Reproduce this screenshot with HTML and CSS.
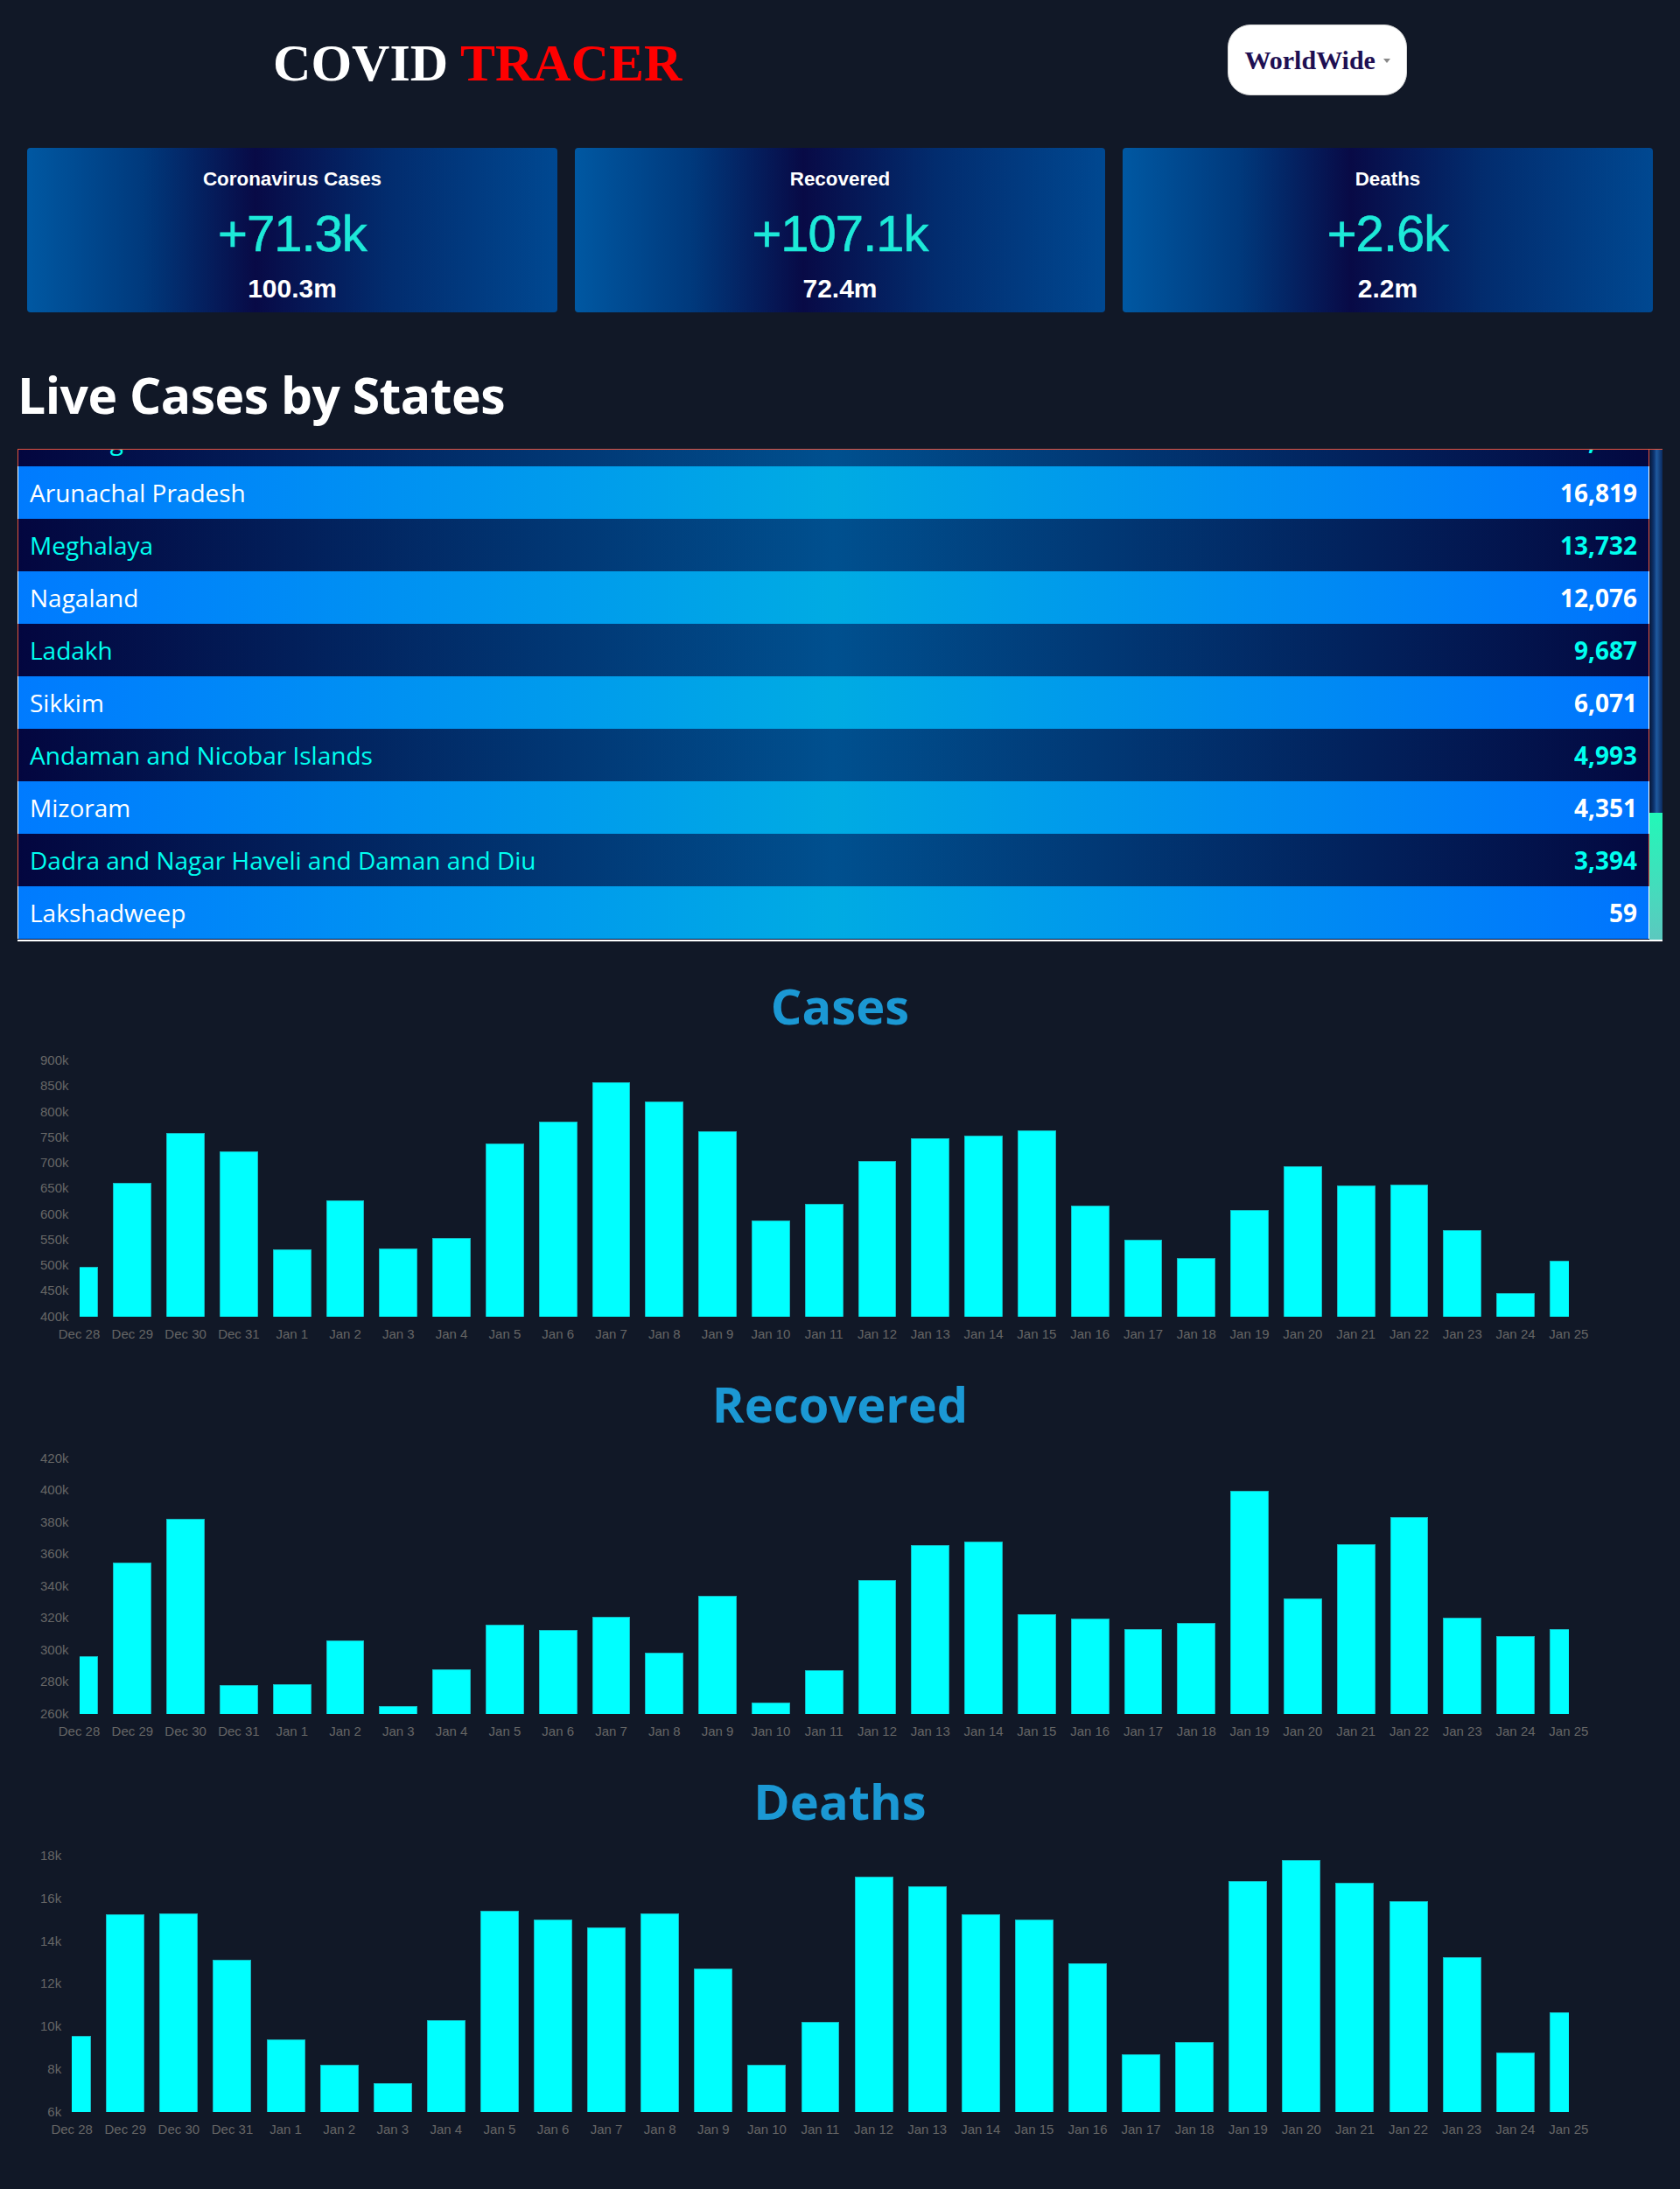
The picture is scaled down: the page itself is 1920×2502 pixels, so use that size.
FILE: index.html
```html
<!DOCTYPE html>
<html lang="en">
<head>
<meta charset="utf-8">
<title>COVID TRACER</title>
<link rel="stylesheet" href="styles.css">
</head>
<body>
<header class="topbar">
  <h1 class="brand"><span class="brand-white">COVID</span> <span class="brand-red">TRACER</span></h1>
  <div class="country-select">
    <span class="country-label">WorldWide</span>
    <span class="caret"></span>
  </div>
</header>

<section class="cards">
  <div class="card">
    <div class="card-title">Coronavirus Cases</div>
    <div class="card-delta">+71.3k</div>
    <div class="card-total">100.3m</div>
  </div>
  <div class="card">
    <div class="card-title">Recovered</div>
    <div class="card-delta">+107.1k</div>
    <div class="card-total">72.4m</div>
  </div>
  <div class="card">
    <div class="card-title">Deaths</div>
    <div class="card-delta">+2.6k</div>
    <div class="card-total">2.2m</div>
  </div>
</section>

<section class="states">
  <h2 class="states-heading">Live Cases by States</h2>
  <div class="states-frame">
    <div class="states-scroll">
      <div class="states-list">
        <div class="row dark"><span>Chandigarh</span><b>20,786</b></div>
        <div class="row light"><span>Arunachal Pradesh</span><b>16,819</b></div>
        <div class="row dark"><span>Meghalaya</span><b>13,732</b></div>
        <div class="row light"><span>Nagaland</span><b>12,076</b></div>
        <div class="row dark"><span>Ladakh</span><b>9,687</b></div>
        <div class="row light"><span>Sikkim</span><b>6,071</b></div>
        <div class="row dark"><span>Andaman and Nicobar Islands</span><b>4,993</b></div>
        <div class="row light"><span>Mizoram</span><b>4,351</b></div>
        <div class="row dark"><span>Dadra and Nagar Haveli and Daman and Diu</span><b>3,394</b></div>
        <div class="row light"><span>Lakshadweep</span><b>59</b></div>
      </div>
    </div>
    <div class="scrollbar"><div class="scroll-thumb"></div></div>
  </div>
</section>

<section class="chart-section">
  <h2 class="chart-title">Cases</h2>
  <div class="chart">
    <div class="y-axis"><span>900k</span><span>850k</span><span>800k</span><span>750k</span><span>700k</span><span>650k</span><span>600k</span><span>550k</span><span>500k</span><span>450k</span><span>400k</span></div>
    <div class="plot">
      <div class="bars">
        <div class="slot"><i style="height:19.4%"></i></div>
        <div class="slot"><i style="height:52.3%"></i></div>
        <div class="slot"><i style="height:71.8%"></i></div>
        <div class="slot"><i style="height:64.4%"></i></div>
        <div class="slot"><i style="height:26.2%"></i></div>
        <div class="slot"><i style="height:45.2%"></i></div>
        <div class="slot"><i style="height:26.6%"></i></div>
        <div class="slot"><i style="height:30.7%"></i></div>
        <div class="slot"><i style="height:67.5%"></i></div>
        <div class="slot"><i style="height:76.1%"></i></div>
        <div class="slot"><i style="height:91.4%"></i></div>
        <div class="slot"><i style="height:83.8%"></i></div>
        <div class="slot"><i style="height:72.4%"></i></div>
        <div class="slot"><i style="height:37.5%"></i></div>
        <div class="slot"><i style="height:44%"></i></div>
        <div class="slot"><i style="height:60.8%"></i></div>
        <div class="slot"><i style="height:69.6%"></i></div>
        <div class="slot"><i style="height:70.6%"></i></div>
        <div class="slot"><i style="height:72.8%"></i></div>
        <div class="slot"><i style="height:43.4%"></i></div>
        <div class="slot"><i style="height:30%"></i></div>
        <div class="slot"><i style="height:22.8%"></i></div>
        <div class="slot"><i style="height:41.5%"></i></div>
        <div class="slot"><i style="height:58.6%"></i></div>
        <div class="slot"><i style="height:51.2%"></i></div>
        <div class="slot"><i style="height:51.5%"></i></div>
        <div class="slot"><i style="height:33.6%"></i></div>
        <div class="slot"><i style="height:9.2%"></i></div>
        <div class="slot"><i style="height:21.8%"></i></div>
      </div>
    </div>
    <div class="x-axis">
      <span>Dec 28</span><span>Dec 29</span><span>Dec 30</span><span>Dec 31</span><span>Jan 1</span><span>Jan 2</span><span>Jan 3</span><span>Jan 4</span><span>Jan 5</span><span>Jan 6</span><span>Jan 7</span><span>Jan 8</span><span>Jan 9</span><span>Jan 10</span><span>Jan 11</span><span>Jan 12</span><span>Jan 13</span><span>Jan 14</span><span>Jan 15</span><span>Jan 16</span><span>Jan 17</span><span>Jan 18</span><span>Jan 19</span><span>Jan 20</span><span>Jan 21</span><span>Jan 22</span><span>Jan 23</span><span>Jan 24</span><span>Jan 25</span>
    </div>
  </div>
</section>

<section class="chart-section">
  <h2 class="chart-title">Recovered</h2>
  <div class="chart">
    <div class="y-axis"><span>420k</span><span>400k</span><span>380k</span><span>360k</span><span>340k</span><span>320k</span><span>300k</span><span>280k</span><span>260k</span></div>
    <div class="plot">
      <div class="bars">
        <div class="slot"><i style="height:22.5%"></i></div>
        <div class="slot"><i style="height:59%"></i></div>
        <div class="slot"><i style="height:76.4%"></i></div>
        <div class="slot"><i style="height:11.4%"></i></div>
        <div class="slot"><i style="height:11.8%"></i></div>
        <div class="slot"><i style="height:28.6%"></i></div>
        <div class="slot"><i style="height:3.1%"></i></div>
        <div class="slot"><i style="height:17.3%"></i></div>
        <div class="slot"><i style="height:34.9%"></i></div>
        <div class="slot"><i style="height:32.9%"></i></div>
        <div class="slot"><i style="height:38%"></i></div>
        <div class="slot"><i style="height:23.8%"></i></div>
        <div class="slot"><i style="height:46.2%"></i></div>
        <div class="slot"><i style="height:4.6%"></i></div>
        <div class="slot"><i style="height:17.2%"></i></div>
        <div class="slot"><i style="height:52.2%"></i></div>
        <div class="slot"><i style="height:65.9%"></i></div>
        <div class="slot"><i style="height:67.5%"></i></div>
        <div class="slot"><i style="height:39.1%"></i></div>
        <div class="slot"><i style="height:37.4%"></i></div>
        <div class="slot"><i style="height:33%"></i></div>
        <div class="slot"><i style="height:35.4%"></i></div>
        <div class="slot"><i style="height:87.2%"></i></div>
        <div class="slot"><i style="height:45%"></i></div>
        <div class="slot"><i style="height:66.4%"></i></div>
        <div class="slot"><i style="height:76.8%"></i></div>
        <div class="slot"><i style="height:37.5%"></i></div>
        <div class="slot"><i style="height:30.3%"></i></div>
        <div class="slot"><i style="height:33%"></i></div>
      </div>
    </div>
    <div class="x-axis">
      <span>Dec 28</span><span>Dec 29</span><span>Dec 30</span><span>Dec 31</span><span>Jan 1</span><span>Jan 2</span><span>Jan 3</span><span>Jan 4</span><span>Jan 5</span><span>Jan 6</span><span>Jan 7</span><span>Jan 8</span><span>Jan 9</span><span>Jan 10</span><span>Jan 11</span><span>Jan 12</span><span>Jan 13</span><span>Jan 14</span><span>Jan 15</span><span>Jan 16</span><span>Jan 17</span><span>Jan 18</span><span>Jan 19</span><span>Jan 20</span><span>Jan 21</span><span>Jan 22</span><span>Jan 23</span><span>Jan 24</span><span>Jan 25</span>
    </div>
  </div>
</section>

<section class="chart-section">
  <h2 class="chart-title">Deaths</h2>
  <div class="chart">
    <div class="y-axis"><span>18k</span><span>16k</span><span>14k</span><span>12k</span><span>10k</span><span>8k</span><span>6k</span></div>
    <div class="plot">
      <div class="bars">
        <div class="slot"><i style="height:29.7%"></i></div>
        <div class="slot"><i style="height:77.1%"></i></div>
        <div class="slot"><i style="height:77.4%"></i></div>
        <div class="slot"><i style="height:59.3%"></i></div>
        <div class="slot"><i style="height:28.3%"></i></div>
        <div class="slot"><i style="height:18.2%"></i></div>
        <div class="slot"><i style="height:11%"></i></div>
        <div class="slot"><i style="height:35.8%"></i></div>
        <div class="slot"><i style="height:78.3%"></i></div>
        <div class="slot"><i style="height:75.2%"></i></div>
        <div class="slot"><i style="height:72.1%"></i></div>
        <div class="slot"><i style="height:77.6%"></i></div>
        <div class="slot"><i style="height:55.8%"></i></div>
        <div class="slot"><i style="height:18.2%"></i></div>
        <div class="slot"><i style="height:34.9%"></i></div>
        <div class="slot"><i style="height:91.7%"></i></div>
        <div class="slot"><i style="height:87.9%"></i></div>
        <div class="slot"><i style="height:77%"></i></div>
        <div class="slot"><i style="height:74.9%"></i></div>
        <div class="slot"><i style="height:57.8%"></i></div>
        <div class="slot"><i style="height:22.5%"></i></div>
        <div class="slot"><i style="height:27.3%"></i></div>
        <div class="slot"><i style="height:90.1%"></i></div>
        <div class="slot"><i style="height:98.3%"></i></div>
        <div class="slot"><i style="height:89.4%"></i></div>
        <div class="slot"><i style="height:82.2%"></i></div>
        <div class="slot"><i style="height:60.3%"></i></div>
        <div class="slot"><i style="height:23.2%"></i></div>
        <div class="slot"><i style="height:38.9%"></i></div>
      </div>
    </div>
    <div class="x-axis">
      <span>Dec 28</span><span>Dec 29</span><span>Dec 30</span><span>Dec 31</span><span>Jan 1</span><span>Jan 2</span><span>Jan 3</span><span>Jan 4</span><span>Jan 5</span><span>Jan 6</span><span>Jan 7</span><span>Jan 8</span><span>Jan 9</span><span>Jan 10</span><span>Jan 11</span><span>Jan 12</span><span>Jan 13</span><span>Jan 14</span><span>Jan 15</span><span>Jan 16</span><span>Jan 17</span><span>Jan 18</span><span>Jan 19</span><span>Jan 20</span><span>Jan 21</span><span>Jan 22</span><span>Jan 23</span><span>Jan 24</span><span>Jan 25</span>
    </div>
  </div>
</section>
</body>
</html>
```

FILE: styles.css
```css
* { box-sizing: border-box; }

html, body {
  margin: 0;
  padding: 0;
  background: #111827;
}

body {
  font-family: "Open Sans", "Noto Sans", sans-serif;
  color: #fff;
}

/* ---------- header ---------- */
.topbar {
  display: flex;
  justify-content: space-around;
  align-items: center;
  padding-top: 28px;
  height: 109px;
}

.brand {
  margin: 0;
  font-family: "Liberation Serif", "Times New Roman", serif;
  font-weight: 700;
  font-size: 60px;
  line-height: 1;
  padding-top: 6px;
  white-space: nowrap;
}

.brand-white { color: #fff; }
.brand-red { color: #ff0000; }

.country-select {
  display: flex;
  align-items: center;
  gap: 9px;
  height: 81px;
  padding: 0 18px;
  background: #fff;
  border: 1px solid #d8d8d8;
  border-radius: 26px;
}

.country-label {
  font-family: "Liberation Serif", "Times New Roman", serif;
  font-weight: 700;
  font-size: 30px;
  color: #1e0f52;
}

.caret {
  width: 0;
  height: 0;
  border-left: 4px solid transparent;
  border-right: 4px solid transparent;
  border-top: 5px solid #888;
  margin-top: 2px;
}

/* ---------- cards ---------- */
.cards {
  display: grid;
  grid-template-columns: repeat(3, 1fr);
  gap: 20px;
  padding: 0 31px;
  margin-top: 60px;
}

.card {
  height: 188px;
  border-radius: 4px;
  background: linear-gradient(to right, #0058a2 0%, #00397c 22%, #080a46 43%, #022c6e 68%, #004891 100%);
  text-align: center;
  font-family: "Liberation Sans", Arial, sans-serif;
  padding-top: 23px;
}

.card-title {
  font-size: 22.4px;
  font-weight: 700;
  color: #fff;
  line-height: 26px;
}

.card-delta {
  font-size: 58px;
  line-height: 66px;
  color: #1de9d8;
  margin-top: 16px;
  letter-spacing: -1px;
  -webkit-text-stroke: 0.6px #1de9d8;
}

.card-total {
  font-size: 30px;
  font-weight: 700;
  line-height: 34px;
  color: #fff;
  margin-top: 13px;
}

/* ---------- states table ---------- */
.states {
  padding: 0 20px;
  margin-bottom: 3px;
}

.states-heading {
  margin: 55px 0 0;
  font-size: 57px;
  font-weight: 700;
  line-height: 78px;
  color: #fff;
  letter-spacing: -0.5px;
}

.states-frame {
  display: flex;
  margin-top: 23px;
  height: 563px;
  border-top: 1px solid #e5533d;
  border-bottom: 2px solid #fff;
}

.states-scroll {
  flex: 1 1 auto;
  min-width: 0;
  overflow: hidden;
  display: flex;
  flex-direction: column-reverse;
}

.states-list {
  border-bottom: 1px solid #041036;
}

.scrollbar {
  width: 15px;
  flex: 0 0 15px;
  display: flex;
  flex-direction: column;
  justify-content: flex-end;
  background: linear-gradient(to right, #061636 0%, #0d3470 35%, #1f5aa0 55%, #0b2a5e 100%);
}

.scroll-thumb {
  height: 145px;
  background: linear-gradient(to bottom, #22f8b8, #5cc8bf);
}

.row {
  display: flex;
  justify-content: space-between;
  align-items: center;
  height: 60px;
  padding: 0 13px;
  font-size: 28px;
  line-height: 60px;
  border-left: 1px solid #e5533d;
  border-right: 1px solid #e5533d;
  white-space: nowrap;
}

.row b { font-weight: 700; }

.row.light {
  background: linear-gradient(to right, #007bff, #00abe3 50%, #0074fe);
  color: #fff;
  border-color: #fff;
}

.row.dark {
  background: linear-gradient(to right, #03063f, #00508f 50%, #030840);
  color: #00fff0;
}

/* ---------- charts ---------- */
.chart-section {
  padding-top: 32px;
}

.chart-title {
  margin: 0;
  text-align: center;
  font-size: 56px;
  line-height: 76px;
  font-weight: 700;
  color: #1b98d4;
}

.chart {
  display: grid;
  grid-template-columns: auto 1fr;
  grid-template-rows: 292.5px auto;
  column-gap: 12px;
  padding: 25px 127px 0 46px;
  font-family: "Liberation Sans", Arial, sans-serif;
  font-size: 15px;
  color: #666;
}

.y-axis {
  display: flex;
  flex-direction: column;
  justify-content: space-between;
  align-items: flex-end;
  margin: -9px 0;
  line-height: 18px;
}

.plot {
  height: 292.5px;
  overflow: hidden;
}

.bars {
  display: flex;
  height: 100%;
  width: calc(100% * 29 / 28);
  margin-left: calc(-100% / 56);
}

.slot {
  flex: 1 1 0;
  display: flex;
  justify-content: center;
  align-items: flex-end;
}

.slot i {
  display: block;
  width: 72%;
  background: #00ffff;
  border: 1px solid #14b8c0;
  border-bottom: 0;
}

.x-axis {
  grid-column: 2;
  display: flex;
  width: calc(100% * 29 / 28);
  margin-left: calc(-100% / 56);
  margin-top: 11px;
  line-height: 18px;
}

.x-axis span {
  flex: 1 1 0;
  text-align: center;
  white-space: nowrap;
}
```
